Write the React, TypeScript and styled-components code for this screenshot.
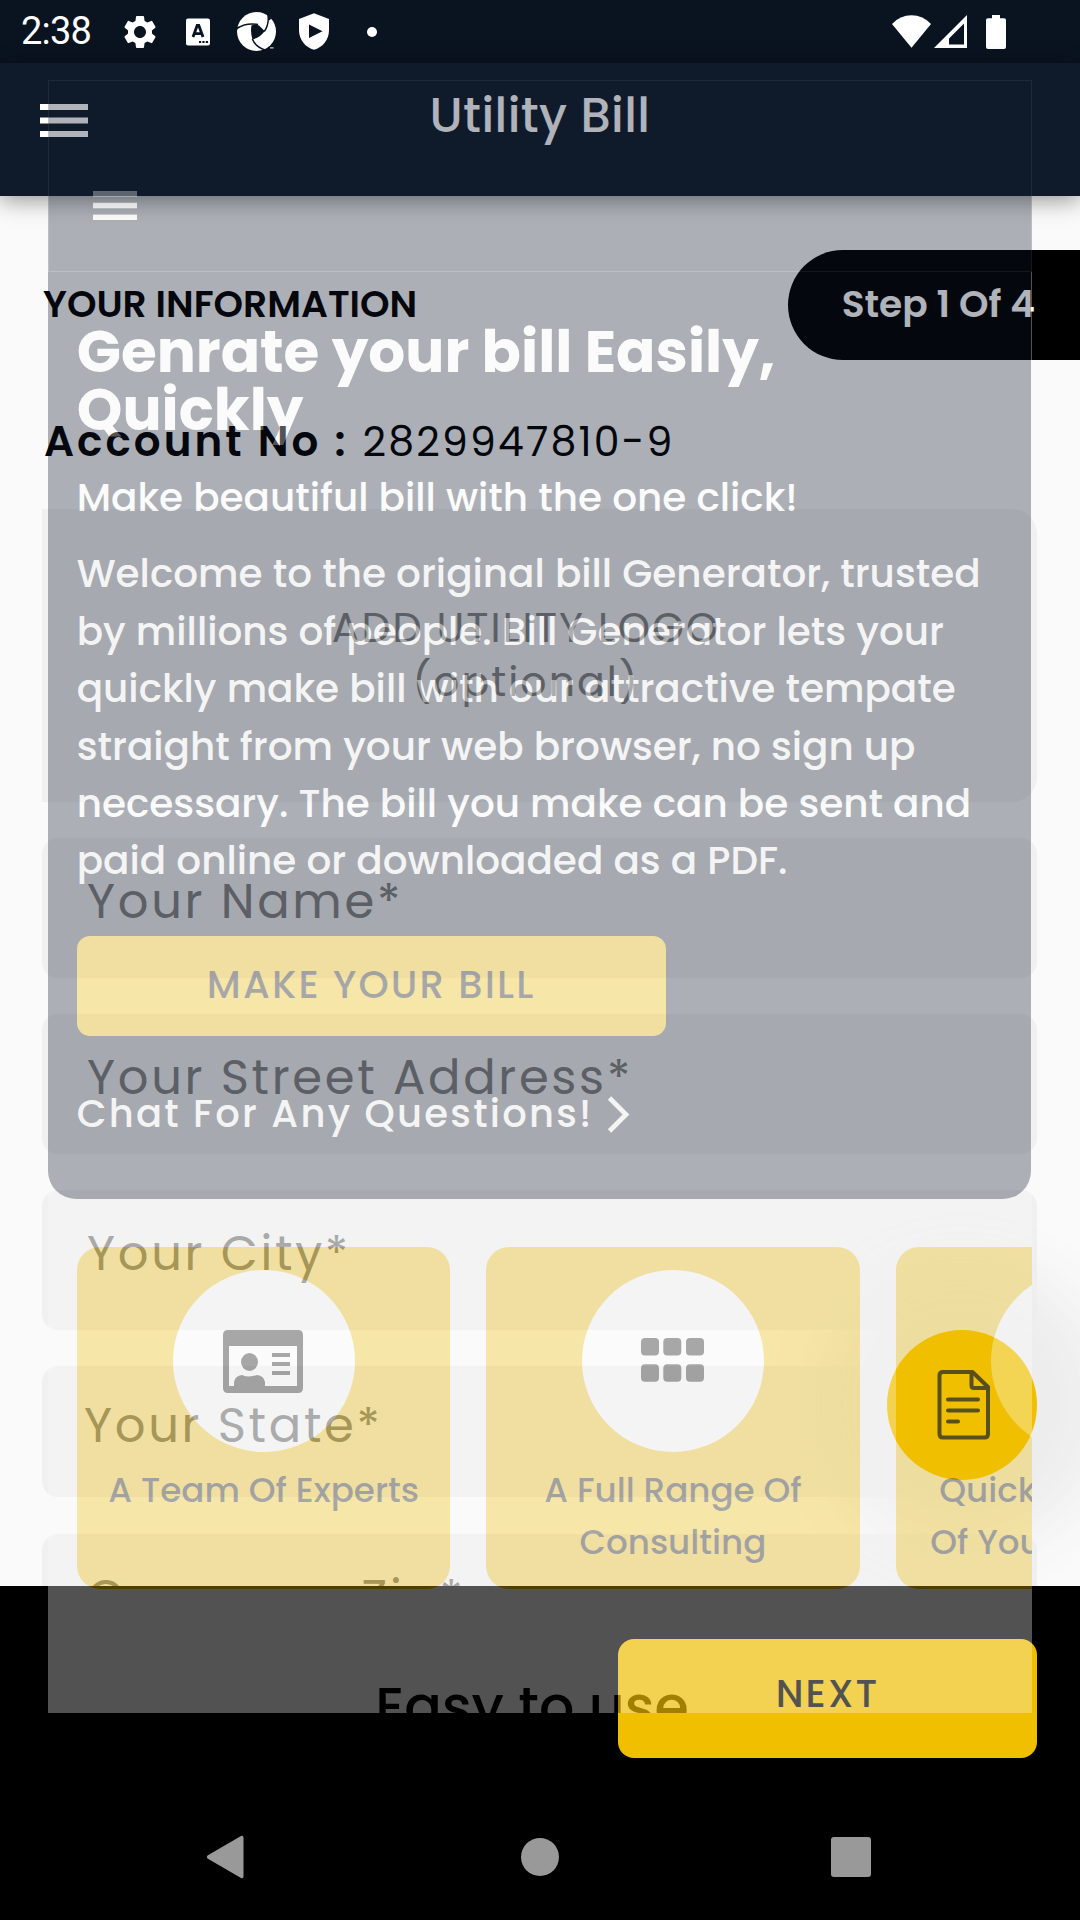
import React from 'react';
import styled, { createGlobalStyle } from 'styled-components';
import { MdSettings } from 'react-icons/md';

const NAVY = '#0f1a2b';
const GOLD = '#f0bf00';

const GlobalStyle = createGlobalStyle`
  *, *::before, *::after { box-sizing: border-box; }
  body { margin: 0; background: #000; }
  svg { display: block; flex: none; }
`;

const Screen = styled.div`
  position: relative;
  width: 1080px;
  height: 1920px;
  overflow: hidden;
  display: flex;
  flex-direction: column;
  background: #000;
  font-family: Poppins, Inter, 'Liberation Sans', sans-serif;
  white-space: nowrap;
`;

/* ---------- system status bar ---------- */

const StatusBar = styled.div`
  height: 63px;
  flex: none;
  display: flex;
  justify-content: space-between;
  padding: 0 74px 0 21px;
  background: #0a1320;
`;

const StatusGroup = styled.div`
  display: flex;
  align-items: center;
  height: 63px;
`;

const Clock = styled.span`
  width: 99px;
  font: 400 38px/67px Roboto, sans-serif;
  letter-spacing: -0.77px;
  color: #fff;
`;

const Spaced = styled.span<{ $before: number }>`
  margin-left: ${(p) => p.$before}px;
`;

/* ---------- form screen ---------- */

const AppBar = styled.header`
  position: relative;
  z-index: 1;
  height: 133px;
  flex: none;
  display: grid;
  grid-template-columns: 140px 1fr 140px;
  align-items: start;
  background: ${NAVY};
  box-shadow: 0 4px 22px rgba(0, 0, 0, 0.42);
`;

const MenuButton = styled.div`
  padding: 41.4px 0 0 40px;
`;

const AppTitle = styled.h1`
  margin: 0;
  text-align: center;
  font-size: 48px;
  font-weight: 500;
  line-height: 106px;
  letter-spacing: 0.45px;
  color: #fff;
`;

const Form = styled.main`
  height: 1390px;
  flex: none;
  overflow: hidden;
  display: flex;
  flex-direction: column;
  background: #fafafa;
`;

const SectionHead = styled.div`
  display: flex;
  justify-content: space-between;
  height: 109.5px;
  flex: none;
  margin-top: 54px;
  padding-left: 43px;
`;

const SectionTitle = styled.h2`
  margin: 0;
  font-size: 37.6px;
  font-weight: 600;
  line-height: 108px;
  color: #000;
`;

const StepPill = styled.div`
  width: 292px;
  padding-left: 53.7px;
  border-radius: 55px 0 0 55px;
  background: #000;
  color: #fff;
  font-size: 37.5px;
  font-weight: 600;
  line-height: 108px;
`;

const Account = styled.div`
  display: flex;
  align-items: baseline;
  gap: 14px;
  height: 60px;
  flex: none;
  margin: 52.5px 0 37px 44px;
  line-height: 60px;
  color: #000;
`;

const AccountLabel = styled.span`
  font-size: 42px;
  font-weight: 600;
  letter-spacing: 3.05px;
`;

const AccountNumber = styled.span`
  font-size: 41px;
  font-weight: 400;
  letter-spacing: 2.16px;
`;

const LogoDrop = styled.div`
  width: 995px;
  height: 293px;
  flex: none;
  margin: 0 0 36px 42px;
  padding: 92px 27px 0 0;
  border-radius: 0 25px 25px 0;
  background: #f0f0f0;
  color: #828282;
  font-size: 41px;
  line-height: 54px;
  letter-spacing: 2.07px;
  text-align: center;
`;

const Field = styled.div<{ $height?: number; $inset?: number; $gap?: number }>`
  width: 995px;
  height: ${(p) => p.$height ?? 140}px;
  flex: none;
  margin: 0 0 ${(p) => p.$gap ?? 36}px 42px;
  padding-left: ${(p) => p.$inset ?? 45}px;
  border-radius: 16px;
  background: #f0f0f0;
  color: #828282;
  font-size: 48px;
  line-height: ${(p) => (p.$height ?? 140) - 12}px;
  letter-spacing: 2.7px;
`;

const Fab = styled.div`
  position: absolute;
  left: 887px;
  top: 1330px;
  width: 150px;
  height: 150px;
  display: flex;
  align-items: center;
  justify-content: center;
  padding-left: 4px;
  border-radius: 50%;
  background: ${GOLD};
  box-shadow: 0 0 60px 72px #ededed;
`;

const Footer = styled.footer`
  position: relative;
  flex: 1;
  display: flex;
  flex-direction: column;
  background: #000;
`;

const NextButton = styled.div`
  align-self: flex-end;
  width: 419px;
  height: 119px;
  margin: 53.3px 43px 0 0;
  border-radius: 16px;
  background: ${GOLD};
  color: #000;
  text-align: center;
  font-size: 38.5px;
  font-weight: 500;
  line-height: 109px;
  letter-spacing: 2.1px;
`;

const SystemNav = styled.nav`
  display: grid;
  grid-template-columns: 312px 317px 306px;
  justify-items: center;
  align-items: center;
  height: 126px;
  margin: 35.7px 0 0 69px;
`;

/* ---------- landing screen fading over the form ---------- */

const Landing = styled.section`
  position: absolute;
  z-index: 2;
  left: 48px;
  top: 80px;
  width: 984px;
  height: 1633px;
  overflow: hidden;
  display: flex;
  flex-direction: column;
  background: #fafafa;
  opacity: 0.325;
`;

const LandingBar = styled.div`
  height: 192px;
  flex: none;
  padding: 110px 0 0 44px;
  border: 1px solid #46494f;
  background: ${NAVY};
`;

const Hero = styled.div`
  height: 927px;
  flex: none;
  display: flex;
  flex-direction: column;
  margin-right: 1px;
  padding: 51px 0 0 28.7px;
  border-radius: 0 0 28px 28px;
  background: ${NAVY};
  color: #fff;
`;

const HeroTitle = styled.h2`
  margin: 0 0 30.4px;
  font-size: 58.05px;
  font-weight: 700;
  line-height: 58px;
`;

const HeroText = styled.p`
  margin: 0 0 18.6px;
  font-size: 38.95px;
  font-weight: 500;
  line-height: 57.4px;
`;

const MakeButton = styled.div`
  width: 589px;
  height: 100.4px;
  flex: none;
  margin-top: 27.6px;
  border-radius: 13px;
  background: ${GOLD};
  color: #000;
  text-align: center;
  font-size: 38.5px;
  font-weight: 500;
  line-height: 97px;
  letter-spacing: 2.17px;
`;

const ChatLink = styled.div`
  display: flex;
  align-items: center;
  gap: 13px;
  margin-top: 53px;
  font-size: 38.5px;
  font-weight: 500;
  line-height: 50px;
  letter-spacing: 2.25px;
`;

const Cards = styled.div`
  display: flex;
  gap: 36px;
  height: 342px;
  flex: none;
  margin-top: 48px;
  padding-left: 29px;
`;

const Card = styled.div`
  width: 373.3px;
  flex: none;
  display: flex;
  flex-direction: column;
  align-items: center;
  gap: 13px;
  padding-top: 23px;
  border-radius: 23px;
  background: ${GOLD};
`;

const Disc = styled.div`
  width: 182px;
  height: 182px;
  flex: none;
  display: flex;
  align-items: center;
  justify-content: center;
  padding-right: 1px;
  border-radius: 50%;
  background: #fff;
`;

const CardLabel = styled.div<{ $align?: string }>`
  align-self: stretch;
  text-align: ${(p) => p.$align ?? 'center'};
  font-size: 34.15px;
  font-weight: 500;
  line-height: 51.7px;
  color: #000;
`;

const CardLine = styled.div<{ $indent?: number }>`
  padding-left: ${(p) => p.$indent ?? 0}px;
`;

const Easy = styled.h3`
  margin: 86px 0 0;
  padding-right: 16px;
  text-align: center;
  font-size: 55.5px;
  font-weight: 500;
  line-height: 64px;
  color: #000;
`;

/* ---------- icons ---------- */

const Bars = ({ w, bar, pitch }: { w: number; bar: number; pitch: number }) => (
  <svg width={w} height={pitch * 2 + bar} fill="#fff">
    {[0, 1, 2].map((i) => (
      <rect key={i} x="0" y={i * pitch} width={w} height={bar} />
    ))}
  </svg>
);

const KeyboardIcon = () => (
  <svg width="24" height="28" viewBox="0 0 24 28">
    <rect width="24" height="27" y="0.5" rx="2" fill="#fff" />
    <path d="M7 19 L11.2 7.5 h1.6 L17 19 M8.6 15.6 h6.8" fill="none" stroke="#0a1320" strokeWidth="2.8" />
    <path d="M13 23h2.2v2H13z M16.4 23h2.2v2h-2.2z M19.8 23H22v2h-2.2z" fill="#0a1320" />
  </svg>
);

const ApertureIcon = () => (
  <svg width="39" height="39" viewBox="0 0 39 39">
    <circle cx="19.5" cy="19.5" r="19.5" fill="#fff" />
    <path d="M14.5 13.2 Q19 12 22 13.5 L27.6 19 Q24.5 24.5 15.5 27.6 Q13.2 20 14.5 13.2Z" fill="#0a1320" />
    <path
      d="M0 16.5 Q9 10.5 21 12.6 M31 3 Q32.3 12 27.3 19.5 M15.3 27 Q18.5 35 29 38.5"
      fill="none"
      stroke="#0a1320"
      strokeWidth="1.5"
    />
    <path d="M30.4 3 L34.5 6.6 L32.2 8.5 Z M26.5 39 L29.5 37 L35 35.2 L33 39Z M0 15 L2.5 14.5 L0 18Z" fill="#0a1320" />
    <path d="M33 35.4h3.6v1H33z" fill="#fff" />
  </svg>
);

const ShieldIcon = () => (
  <svg width="30" height="37" viewBox="0 0 30 37">
    <path d="M15 0.3 L30 6 V17 C30 27 23.5 34.5 15 36.7 C6.5 34.5 0 27 0 17 V6 Z" fill="#fff" />
    <path d="M10 11.5 V25 L23.5 18.2 Z" fill="#0a1320" />
  </svg>
);

const IdCardIcon = () => (
  <svg width="80" height="63" viewBox="0 0 80 63">
    <path
      fillRule="evenodd"
      d="M5 0 H75 Q80 0 80 5 V58 Q80 63 75 63 H5 Q0 63 0 58 V5 Q0 0 5 0Z M6 16 V56 H11 V52 Q12 46 19 45 Q26 48 34 45 Q41 46 42 52 V56 H74 V16Z"
    />
    <ellipse cx="26.5" cy="32" rx="8.5" ry="9" />
    <path d="M49 23 H67 v4 H49z M49 32 H67 v4 H49z M49 41 H67 v4 H49z" />
  </svg>
);

const GridIcon = () => (
  <svg width="63" height="46" viewBox="0 0 63 46">
    {[0, 26.2].map((y) =>
      [0, 22.3, 45].map((x) => <rect key={`${x}-${y}`} x={x} y={y} width="18" height="17.5" rx="4" />)
    )}
  </svg>
);

const DocumentIcon = () => (
  <svg width="54" height="70" viewBox="0 0 54 70" fill="none" stroke="#0f1a2b" strokeWidth="4" strokeLinejoin="round" strokeLinecap="round">
    <path d="M6 2 H35.5 L51 17 V64 Q51 67.5 47.5 67.5 H6 Q2.5 67.5 2.5 64 V5.5 Q2.5 2 6 2Z" />
    <path d="M34.5 3 V15.5 Q34.5 18 37 18 H50.5" />
    <path d="M11 29.5 H41 M11 40.5 H41 M11 51.5 H21" />
  </svg>
);

export default function App() {
  return (
    <>
      <GlobalStyle />
      <Screen>
        <StatusBar>
          <StatusGroup>
            <Clock>2:38</Clock>
            <MdSettings size={40} color="#fff" />
            <Spaced $before={26}><KeyboardIcon /></Spaced>
            <Spaced $before={26.5}><ApertureIcon /></Spaced>
            <Spaced $before={23.5}><ShieldIcon /></Spaced>
            <Spaced $before={38}>
              <svg width="10" height="10"><circle cx="5" cy="5" r="5" fill="#fff" /></svg>
            </Spaced>
          </StatusGroup>
          <StatusGroup>
            <svg width="39" height="33" viewBox="0 0 39 33">
              <path d="M0 9 Q8 0.3 19.5 0.3 Q31 0.3 39 9 L19.5 32.7Z" fill="#fff" />
            </svg>
            <Spaced $before={3}>
              <svg width="34" height="33" viewBox="0 0 34 33">
                <path fillRule="evenodd" d="M33 0 V33 H0Z M30 8.5 L15 23.5 V29.5 H30Z" fill="#fff" />
              </svg>
            </Spaced>
            <Spaced $before={18}>
              <svg width="20" height="34" viewBox="0 0 20 34">
                <path d="M6 0 H14 V3.3 H18 Q20 3.3 20 5.3 V32 Q20 34 18 34 H2 Q0 34 0 32 V5.3 Q0 3.3 2 3.3 H6Z" fill="#fff" />
              </svg>
            </Spaced>
          </StatusGroup>
        </StatusBar>

        <AppBar>
          <MenuButton><Bars w={48} bar={6} pitch={13.5} /></MenuButton>
          <AppTitle>Utility Bill</AppTitle>
        </AppBar>

        <Form>
          <SectionHead>
            <SectionTitle>YOUR INFORMATION</SectionTitle>
            <StepPill>Step 1 Of 4</StepPill>
          </SectionHead>
          <Account>
            <AccountLabel>Account No :</AccountLabel>
            <AccountNumber>2829947810-9</AccountNumber>
          </Account>
          <LogoDrop>
            ADD UTILITY LOGO
            <br />
            (optional)
          </LogoDrop>
          <Field>Your Name*</Field>
          <Field>Your Street Address*</Field>
          <Field>Your City*</Field>
          <Field $height={131} $inset={42} $gap={37}>Your State*</Field>
          <Field>Company Zip*</Field>
        </Form>

        <Fab><DocumentIcon /></Fab>

        <Footer>
          <NextButton>NEXT</NextButton>
          <SystemNav>
            <svg width="38" height="44" viewBox="0 0 38 44">
              <path d="M35 1 Q37.5 0 37.5 3 V41 Q37.5 44 35 43 L1.5 23.5 Q0 22 1.5 20.5Z" fill="#999" />
            </svg>
            <svg width="38" height="38"><circle cx="19" cy="19" r="19" fill="#999" /></svg>
            <svg width="40" height="40"><rect width="40" height="40" rx="3" fill="#999" /></svg>
          </SystemNav>
        </Footer>

        <Landing>
          <LandingBar><Bars w={44} bar={5.5} pitch={11.8} /></LandingBar>
          <Hero>
            <HeroTitle>
              Genrate your bill Easily,
              <br />
              Quickly
            </HeroTitle>
            <HeroText>Make beautiful bill with the one click!</HeroText>
            <HeroText>
              Welcome to the original bill Generator, trusted
              <br />
              by millions of people. Bill Generator lets your
              <br />
              quickly make bill with our attractive tempate
              <br />
              straight from your web browser, no sign up
              <br />
              necessary. The bill you make can be sent and
              <br />
              paid online or downloaded as a PDF.
            </HeroText>
            <MakeButton>MAKE YOUR BILL</MakeButton>
            <ChatLink>
              Chat For Any Questions!
              <svg width="23" height="37" viewBox="0 0 23 37">
                <path d="M2.5 2 L19 18.5 L2.5 35" fill="none" stroke="#fff" strokeWidth="4.8" />
              </svg>
            </ChatLink>
          </Hero>
          <Cards>
            <Card>
              <Disc><IdCardIcon /></Disc>
              <CardLabel>A Team Of Experts</CardLabel>
            </Card>
            <Card>
              <Disc><GridIcon /></Disc>
              <CardLabel>
                A Full Range Of
                <br />
                Consulting
              </CardLabel>
            </Card>
            <Card>
              <Disc />
              <CardLabel $align="left">
                <CardLine $indent={43.6}>Quick</CardLine>
                <CardLine $indent={34.6}>Of You</CardLine>
              </CardLabel>
            </Card>
          </Cards>
          <Easy>Easy to use</Easy>
        </Landing>
      </Screen>
    </>
  );
}
